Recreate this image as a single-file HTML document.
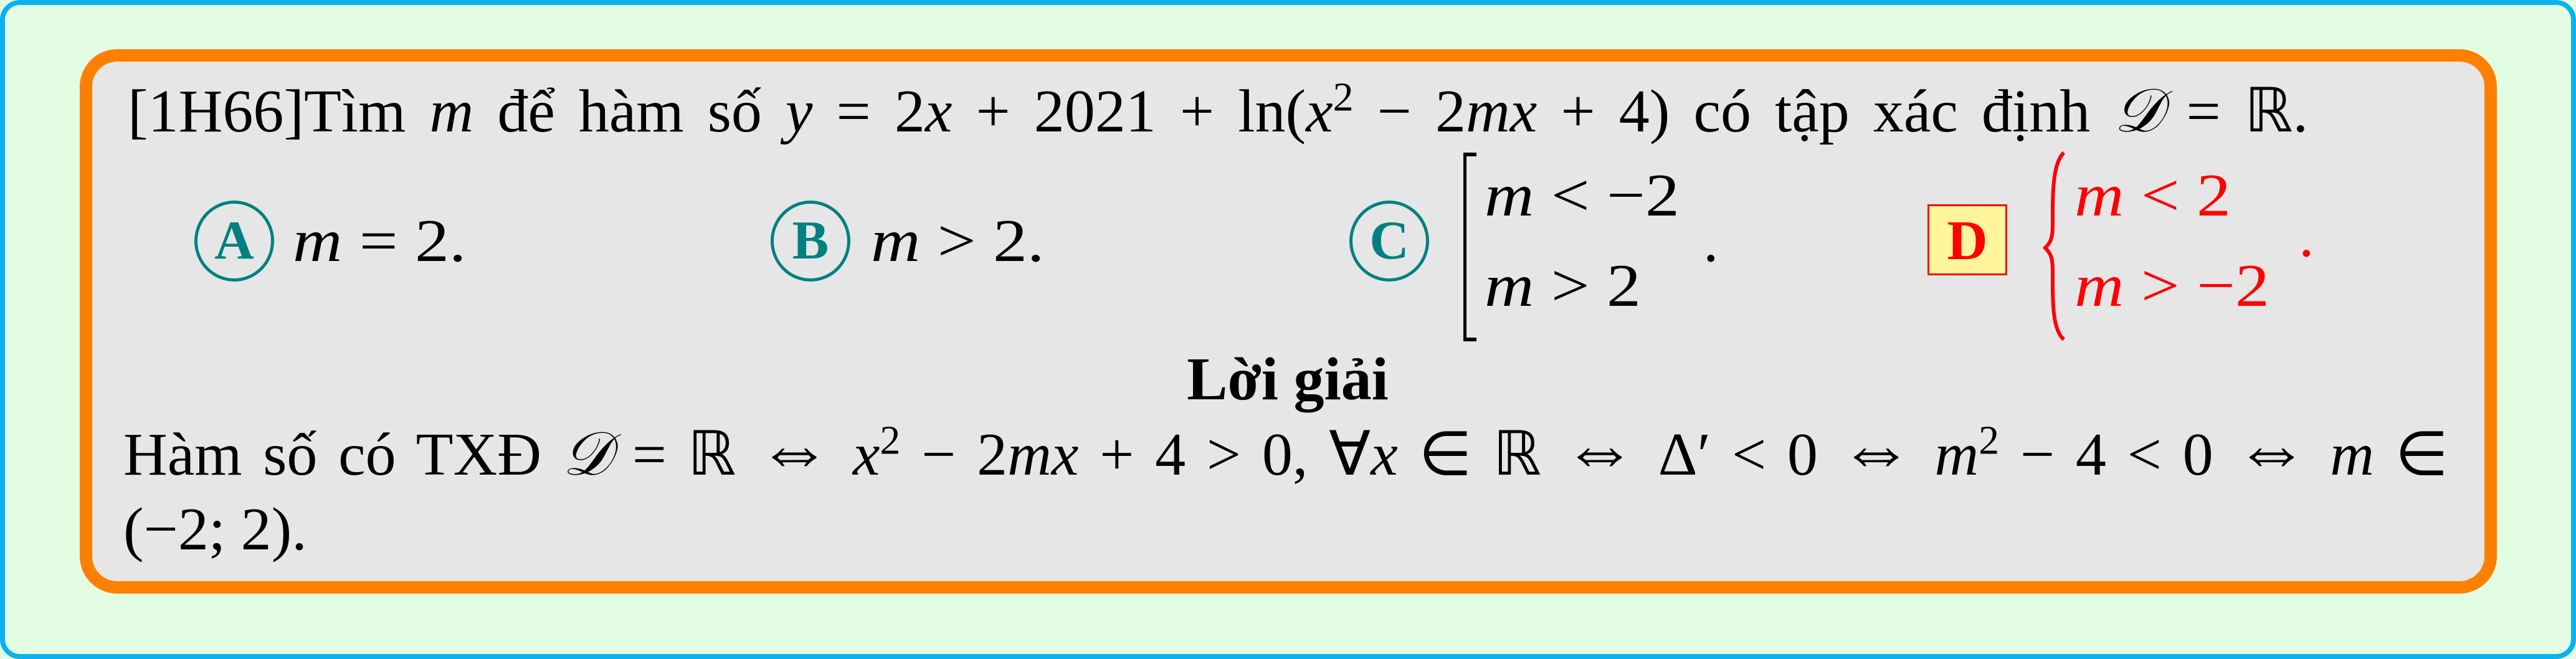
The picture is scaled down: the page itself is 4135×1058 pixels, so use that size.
<!DOCTYPE html>
<html><head><meta charset="utf-8"><style>
html,body{margin:0;padding:0;}
body{width:4135px;height:1058px;position:relative;overflow:hidden;background:#e2fde2;font-family:"Liberation Serif",serif;font-size:98px;color:#000;}
.outer{position:absolute;left:0;top:0;width:4119px;height:1042px;border:8px solid #0bb2ef;border-radius:32px;background:#e2fde2;}
.orange{position:absolute;left:128px;top:79px;width:3840px;height:834px;border:20px solid #ff8000;border-radius:60px;background:#e6e6e6;}
.t{position:absolute;line-height:1;white-space:nowrap;}
i{font-style:italic;}
.j{text-align:justify;text-align-last:justify;white-space:normal;}
.circ{position:absolute;width:118px;height:120px;border:5px solid #008080;border-radius:50%;color:#008080;font-weight:bold;font-size:88px;line-height:120px;text-align:center;}
.red{color:#ff0000;}
.s{display:inline-block;transform:scaleX(1.12);transform-origin:0 0;}
.eq{font-size:120px;line-height:0;}
</style></head><body>
<div class="outer"></div>
<div class="orange"></div>

<div class="t j" style="left:205px;top:130px;width:3500px;">[1H66]Tìm <i>m</i> để hàm số <i>y</i> = 2<i>x</i> + 2021 + ln(<i>x</i><sup style="font-size:66px;line-height:0">2</sup> − 2<i>mx</i> + 4) có tập xác định <i>𝒟</i> = ℝ.</div>

<div class="circ" style="left:312px;top:322px;">A</div>
<div class="t" style="left:470px;top:338px;"><span class="s"><i>m</i> = 2.</span></div>
<div class="circ" style="left:1237px;top:322px;">B</div>
<div class="t" style="left:1398px;top:338px;"><span class="s"><i>m</i> &gt; 2.</span></div>
<div class="circ" style="left:2166px;top:322px;">C</div>
<div style="position:absolute;left:2349px;top:245px;width:16px;height:291px;border-left:5px solid #000;border-top:6px solid #000;border-bottom:6px solid #000;"></div>
<div class="t" style="left:2383px;top:265px;"><span class="s"><i>m</i> &lt; −2</span></div>
<div class="t" style="left:2383px;top:410px;"><span class="s"><i>m</i> &gt; 2</span></div>
<div class="t" style="left:2734px;top:338px;">.</div>

<div style="position:absolute;left:3094px;top:328px;width:122px;height:108px;border:3px solid #ff0000;background:#fff59a;"></div>
<div class="t red" style="left:3094px;top:342px;width:128px;text-align:center;font-weight:bold;font-size:90px;">D</div>
<svg style="position:absolute;left:3255px;top:240px;" width="70" height="310" viewBox="0 0 70 310">
<path d="M58 5 C42 20 40 60 40 100 L40 120 C40 140 38 148 28 158 C38 168 40 176 40 196 L40 216 C40 256 42 292 58 305" fill="none" stroke="#ff0000" stroke-width="6"/>
</svg>
<div class="t red" style="left:3330px;top:265px;"><span class="s"><i>m</i> &lt; 2</span></div>
<div class="t red" style="left:3330px;top:410px;"><span class="s"><i>m</i> &gt; −2</span></div>
<div class="t red" style="left:3690px;top:330px;">.</div>

<div class="t" style="left:1889px;top:560px;font-weight:bold;width:356px;text-align:center;">Lời giải</div>

<div class="t j" style="left:198px;top:681px;width:3732px;">Hàm số có TXĐ <i>𝒟</i> = ℝ <span class="eq">⇔</span> <i>x</i><sup style="font-size:66px;line-height:0">2</sup> − 2<i>mx</i> + 4 &gt; 0, ∀<i>x</i> ∈ ℝ <span class="eq">⇔</span> Δ′ &lt; 0 <span class="eq">⇔</span> <i>m</i><sup style="font-size:66px;line-height:0">2</sup> − 4 &lt; 0 <span class="eq">⇔</span> <i>m</i> ∈</div>
<div class="t" style="left:198px;top:801px;">(−2; 2).</div>
</body></html>
